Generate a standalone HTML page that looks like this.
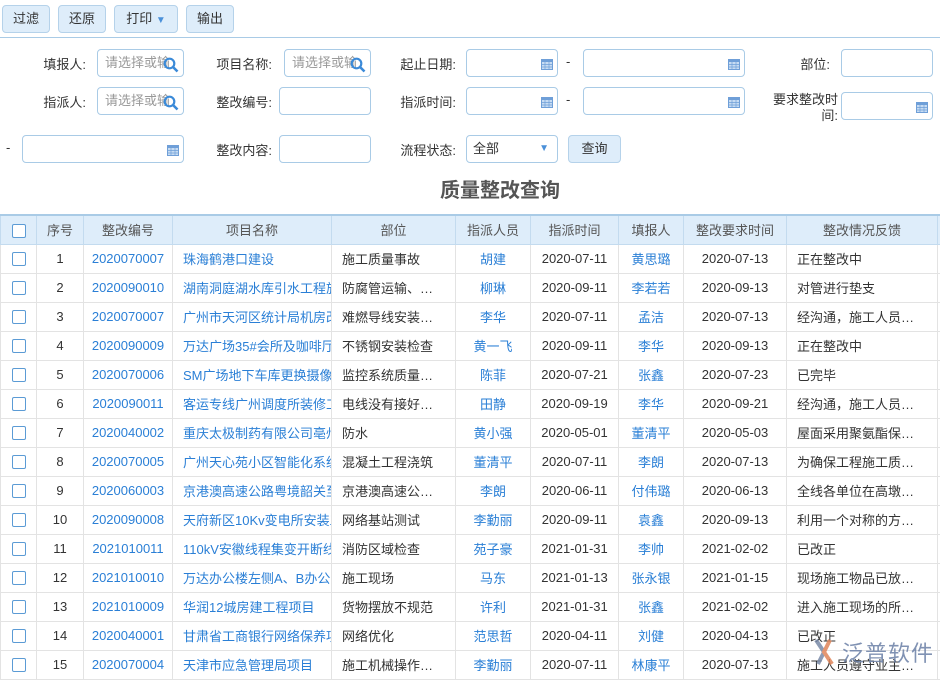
<!DOCTYPE html>
<html><head><meta charset="utf-8"><style>
*{box-sizing:border-box;margin:0;padding:0}
body{width:940px;height:681px;overflow:hidden;background:#fff;font-family:"Liberation Sans","Noto Sans CJK SC",sans-serif;font-size:13px;color:#333;position:relative}
.top{position:absolute;left:0;top:0;width:940px;height:38px;border-bottom:1px solid #a9cbe6;background:#fff}
.btn{position:absolute;top:5px;height:28px;border:1px solid #b5d2ea;border-radius:4px;background:#deedfa;color:#333;line-height:26px;text-align:center;font-size:13px}
.lbl{position:absolute;text-align:right;font-size:13px;color:#333}
.inp{position:absolute;height:28px;border:1px solid #a9cbe6;border-radius:4px;background:#fff;font-size:13px;color:#999;line-height:26px;padding-left:7px;overflow:hidden}
.ico{position:absolute;right:4px;top:7px}
.title{position:absolute;left:0;width:1000px;top:174px;text-align:center;font-size:20px;font-weight:bold;color:#555}
table{position:absolute;left:0;top:214px;border-collapse:collapse;table-layout:fixed;width:960px}
td,th{height:29px;border:1px solid #e3e3e3;font-weight:normal;font-size:13px;white-space:nowrap;overflow:hidden;text-align:center;padding:0 4px}
th{background:#deedfa;border-color:#c3dbef;color:#555}
tr.h th{border-top:2px solid #a9cbe6}
.l{text-align:left;padding-left:10px}
.b{color:#2a7fd6}
.cb{display:inline-block;width:14px;height:14px;border:1px solid #5b9bd5;border-radius:2px;vertical-align:middle;background:#fff}
</style></head><body>
<div class="top">
<div class="btn" style="left:2px;width:48px">过滤</div>
<div class="btn" style="left:58px;width:48px">还原</div>
<div class="btn" style="left:114px;width:64px">打印 <span style="color:#4a90d9;font-size:10px">▼</span></div>
<div class="btn" style="left:186px;width:48px">输出</div>
</div>
<svg width="0" height="0" style="position:absolute"><defs>
<symbol id="s" viewBox="0 0 16 16"><circle cx="6.5" cy="6.5" r="4.8" fill="none" stroke="#3b8ad8" stroke-width="2.2"/><line x1="10" y1="10" x2="14.5" y2="14.5" stroke="#3b8ad8" stroke-width="2.6"/></symbol>
<symbol id="c" viewBox="0 0 12 12"><rect x="0.5" y="1.5" width="11" height="10" fill="#c7dcf3" stroke="#6f9fd8"/><rect x="0.5" y="1.5" width="11" height="2.5" fill="#6f9fd8"/><path d="M4 4v7M8 4v7M1 6.5h10M1 9h10" stroke="#6f9fd8" stroke-width="0.7"/></symbol>
</defs></svg>
<div class="lbl" style="left:20px;width:66px;top:54px">填报人:</div>
<div class="inp" style="left:97px;top:49px;width:87px">请选择或输<svg class="ico" width="16" height="16"><use href="#s"/></svg></div>
<div class="lbl" style="left:190px;width:82px;top:54px">项目名称:</div>
<div class="inp" style="left:284px;top:49px;width:87px">请选择或输<svg class="ico" width="16" height="16"><use href="#s"/></svg></div>
<div class="lbl" style="left:380px;width:76px;top:54px">起止日期:</div>
<div class="inp" style="left:466px;top:49px;width:92px"><svg class="ico" width="12" height="12" style="top:8px"><use href="#c"/></svg></div>
<div class="lbl" style="left:566px;top:54px">-</div>
<div class="inp" style="left:583px;top:49px;width:162px"><svg class="ico" width="12" height="12" style="top:8px"><use href="#c"/></svg></div>
<div class="lbl" style="left:770px;width:60px;top:54px">部位:</div>
<div class="inp" style="left:841px;top:49px;width:92px"></div>

<div class="lbl" style="left:20px;width:66px;top:92px">指派人:</div>
<div class="inp" style="left:97px;top:87px;width:87px">请选择或输<svg class="ico" width="16" height="16"><use href="#s"/></svg></div>
<div class="lbl" style="left:190px;width:82px;top:92px">整改编号:</div>
<div class="inp" style="left:279px;top:87px;width:92px"></div>
<div class="lbl" style="left:380px;width:76px;top:92px">指派时间:</div>
<div class="inp" style="left:466px;top:87px;width:92px"><svg class="ico" width="12" height="12" style="top:8px"><use href="#c"/></svg></div>
<div class="lbl" style="left:566px;top:92px">-</div>
<div class="inp" style="left:583px;top:87px;width:162px"><svg class="ico" width="12" height="12" style="top:8px"><use href="#c"/></svg></div>
<div class="lbl" style="left:760px;width:78px;top:92px;line-height:16px">要求整改时<br>间:</div>
<div class="inp" style="left:841px;top:92px;width:92px"><svg class="ico" width="12" height="12" style="top:8px"><use href="#c"/></svg></div>

<div class="lbl" style="left:6px;top:140px">-</div>
<div class="inp" style="left:22px;top:135px;width:162px"><svg class="ico" width="12" height="12" style="top:8px"><use href="#c"/></svg></div>
<div class="lbl" style="left:190px;width:82px;top:140px">整改内容:</div>
<div class="inp" style="left:279px;top:135px;width:92px"></div>
<div class="lbl" style="left:380px;width:76px;top:140px">流程状态:</div>
<div class="inp" style="left:466px;top:135px;width:92px;color:#333;padding-left:6px">全部<span style="position:absolute;right:8px;top:0;color:#4a90d9;font-size:10px">▼</span></div>
<div class="btn" style="left:568px;top:135px;width:53px;height:28px">查询</div>

<div class="title">质量整改查询</div>

<table>
<colgroup><col style="width:36px"><col style="width:47px"><col style="width:89px"><col style="width:159px"><col style="width:124px"><col style="width:75px"><col style="width:88px"><col style="width:65px"><col style="width:103px"><col style="width:151px"><col style="width:23px"></colgroup>
<tr class="h"><th><span class="cb"></span></th><th>序号</th><th>整改编号</th><th>项目名称</th><th>部位</th><th>指派人员</th><th>指派时间</th><th>填报人</th><th>整改要求时间</th><th>整改情况反馈</th><th></th></tr>
<tr><td><span class="cb"></span></td><td>1</td><td class="b">2020070007</td><td class="l b">珠海鹤港口建设</td><td class="l">施工质量事故</td><td class="b">胡建</td><td>2020-07-11</td><td class="b">黄思璐</td><td>2020-07-13</td><td class="l">正在整改中</td><td></td></tr>
<tr><td><span class="cb"></span></td><td>2</td><td class="b">2020090010</td><td class="l b">湖南洞庭湖水库引水工程施</td><td class="l">防腐管运输、…</td><td class="b">柳琳</td><td>2020-09-11</td><td class="b">李若若</td><td>2020-09-13</td><td class="l">对管进行垫支</td><td></td></tr>
<tr><td><span class="cb"></span></td><td>3</td><td class="b">2020070007</td><td class="l b">广州市天河区统计局机房改</td><td class="l">难燃导线安装…</td><td class="b">李华</td><td>2020-07-11</td><td class="b">孟洁</td><td>2020-07-13</td><td class="l">经沟通，施工人员…</td><td></td></tr>
<tr><td><span class="cb"></span></td><td>4</td><td class="b">2020090009</td><td class="l b">万达广场35#会所及咖啡厅</td><td class="l">不锈钢安装检查</td><td class="b">黄一飞</td><td>2020-09-11</td><td class="b">李华</td><td>2020-09-13</td><td class="l">正在整改中</td><td></td></tr>
<tr><td><span class="cb"></span></td><td>5</td><td class="b">2020070006</td><td class="l b">SM广场地下车库更换摄像头</td><td class="l">监控系统质量…</td><td class="b">陈菲</td><td>2020-07-21</td><td class="b">张鑫</td><td>2020-07-23</td><td class="l">已完毕</td><td></td></tr>
<tr><td><span class="cb"></span></td><td>6</td><td class="b">2020090011</td><td class="l b">客运专线广州调度所装修工</td><td class="l">电线没有接好…</td><td class="b">田静</td><td>2020-09-19</td><td class="b">李华</td><td>2020-09-21</td><td class="l">经沟通，施工人员…</td><td></td></tr>
<tr><td><span class="cb"></span></td><td>7</td><td class="b">2020040002</td><td class="l b">重庆太极制药有限公司亳州</td><td class="l">防水</td><td class="b">黄小强</td><td>2020-05-01</td><td class="b">董清平</td><td>2020-05-03</td><td class="l">屋面采用聚氨酯保…</td><td></td></tr>
<tr><td><span class="cb"></span></td><td>8</td><td class="b">2020070005</td><td class="l b">广州天心苑小区智能化系统</td><td class="l">混凝土工程浇筑</td><td class="b">董清平</td><td>2020-07-11</td><td class="b">李朗</td><td>2020-07-13</td><td class="l">为确保工程施工质…</td><td></td></tr>
<tr><td><span class="cb"></span></td><td>9</td><td class="b">2020060003</td><td class="l b">京港澳高速公路粤境韶关至</td><td class="l">京港澳高速公…</td><td class="b">李朗</td><td>2020-06-11</td><td class="b">付伟璐</td><td>2020-06-13</td><td class="l">全线各单位在高墩…</td><td></td></tr>
<tr><td><span class="cb"></span></td><td>10</td><td class="b">2020090008</td><td class="l b">天府新区10Kv变电所安装工</td><td class="l">网络基站测试</td><td class="b">李勤丽</td><td>2020-09-11</td><td class="b">袁鑫</td><td>2020-09-13</td><td class="l">利用一个对称的方…</td><td></td></tr>
<tr><td><span class="cb"></span></td><td>11</td><td class="b">2021010011</td><td class="l b">110kV安徽线程集变开断线</td><td class="l">消防区域检查</td><td class="b">苑子豪</td><td>2021-01-31</td><td class="b">李帅</td><td>2021-02-02</td><td class="l">已改正</td><td></td></tr>
<tr><td><span class="cb"></span></td><td>12</td><td class="b">2021010010</td><td class="l b">万达办公楼左侧A、B办公室</td><td class="l">施工现场</td><td class="b">马东</td><td>2021-01-13</td><td class="b">张永银</td><td>2021-01-15</td><td class="l">现场施工物品已放…</td><td></td></tr>
<tr><td><span class="cb"></span></td><td>13</td><td class="b">2021010009</td><td class="l b">华润12城房建工程项目</td><td class="l">货物摆放不规范</td><td class="b">许利</td><td>2021-01-31</td><td class="b">张鑫</td><td>2021-02-02</td><td class="l">进入施工现场的所…</td><td></td></tr>
<tr><td><span class="cb"></span></td><td>14</td><td class="b">2020040001</td><td class="l b">甘肃省工商银行网络保养项</td><td class="l">网络优化</td><td class="b">范思哲</td><td>2020-04-11</td><td class="b">刘健</td><td>2020-04-13</td><td class="l">已改正</td><td></td></tr>
<tr><td><span class="cb"></span></td><td>15</td><td class="b">2020070004</td><td class="l b">天津市应急管理局项目</td><td class="l">施工机械操作…</td><td class="b">李勤丽</td><td>2020-07-11</td><td class="b">林康平</td><td>2020-07-13</td><td class="l">施工人员遵守业主…</td><td></td></tr>
</table>
<div style="position:absolute;left:808px;top:636px;width:130px;height:34px;opacity:0.85">
<svg width="32" height="32" style="position:absolute;left:0;top:0"><path d="M8 4 L16 16 L10 28" stroke="#7a8aa8" stroke-width="4" fill="none"/><path d="M22 4 L16 16 L24 28" stroke="#e0855a" stroke-width="4" fill="none"/></svg>
<span style="position:absolute;left:34px;top:0;font-size:22px;color:#6a7fa6;letter-spacing:1px">泛普软件</span>
</div>
</body></html>
